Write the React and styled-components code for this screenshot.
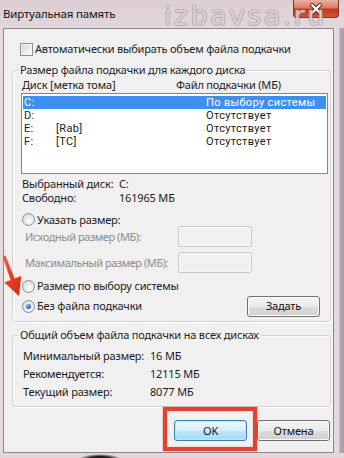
import React from 'react';
import styled, { createGlobalStyle } from 'styled-components';

const Global = createGlobalStyle`
  html, body { margin: 0; padding: 0; width: 344px; height: 458px; overflow: hidden; background: #b9a8b7; }
  #root { width: 344px; height: 458px; }
  * { box-sizing: border-box; }
`;

const Window = styled.div`
  position: relative;
  width: 344px;
  height: 458px;
  display: flex;
  flex-direction: column;
  font-family: "Noto Sans", "Open Sans", sans-serif;
  font-size: 11px;
  letter-spacing: -0.18px;
  white-space: nowrap;
  color: #1b1b1b;
  background: linear-gradient(180deg, #dccdd3 0, #e6dce0 40px, #e4d9de 100%);
  overflow: hidden;
`;

const TitleBar = styled.div`
  position: relative;
  height: 28px;
  display: flex;
  align-items: flex-start;
  flex-shrink: 0;
`;

const Title = styled.div`
  padding: 6px 0 0 3px;
  font-size: 11.5px;
  line-height: 16px;
  color: #111;
`;

const Watermark = styled.div`
  position: absolute;
  left: 164px;
  top: 0;
  font-family: "DejaVu Sans", Verdana, sans-serif;
  font-size: 27px;
  letter-spacing: 2.4px;
  line-height: normal;
  color: rgba(255, 255, 255, 0.62);
  text-shadow:
    1px 0 0 rgba(140, 128, 134, 0.45),
    -1px 0 0 rgba(140, 128, 134, 0.45),
    0 1px 0 rgba(140, 128, 134, 0.45),
    0 -1px 0 rgba(140, 128, 134, 0.35);
  pointer-events: none;
`;

const CloseButton = styled.div`
  margin-left: auto;
  margin-right: 5px;
  width: 46px;
  height: 18px;
  border: 1px solid #6f3a30;
  border-top: none;
  border-radius: 0 0 4px 4px;
  background: linear-gradient(180deg, #eab1a4 0%, #d97d66 45%, #c4391c 55%, #d4522f 100%);
  display: flex;
  align-items: center;
  justify-content: center;
`;

const Body = styled.div`
  flex: 1;
  display: flex;
`;

const SideFrame = styled.div`
  width: ${p => p.$w}px;
  flex-shrink: 0;
  background: ${p => p.$bg || 'transparent'};
`;

const Client = styled.div`
  width: 331px;
  flex-shrink: 0;
  border: 1px solid #8f868b;
  background: #f0f0f0;
  display: flex;
  flex-direction: column;
  padding: 12px 2px 0 8px;
`;

const BottomFrame = styled.div`
  height: 5px;
  flex-shrink: 0;
  background: radial-gradient(ellipse 22px 6px at 100px 7px, #111 0, #222 60%, rgba(0,0,0,0) 100%), #e2d7dc;
`;

const CheckRow = styled.label`
  display: flex;
  align-items: center;
  gap: 2px;
  height: 16px;
  padding-left: 8px;
  line-height: 16px;
`;

const CheckBox = styled.span`
  width: 13px;
  height: 13px;
  border: 1px solid #8e8f8f;
  background: linear-gradient(135deg, #d2d2d2 0%, #eeeeee 60%, #fbfbfb 100%);
  box-shadow: inset 0 0 0 1px #f4f4f4;
`;

const Group = styled.fieldset`
  margin: ${p => p.$mt}px 0 0 0;
  border: 1px solid #d2d2d2;
  border-radius: 3px;
  box-shadow: inset 1px 1px 0 #fff, 1px 1px 0 #fff;
  padding: ${p => p.$pt}px 2px ${p => p.$pb}px 8px;
  min-width: 0;
`;

const Legend = styled.legend`
  padding: 0 2px;
  margin-left: -3px;
  line-height: 16px;
  font-size: 11px;
`;

const HeaderRow = styled.div`
  display: grid;
  grid-template-columns: 154px 1fr;
  padding-left: 1px;
  height: 14px;
  line-height: 14px;
`;

const ListBox = styled.div`
  margin-top: 1px;
  width: 307px;
  height: 81px;
  border: 1px solid #828790;
  background: #fff;
  padding: 2px 1px;
  font-family: Roboto, "Noto Sans", sans-serif;
  font-size: 11px;
`;

const ListRow = styled.div`
  display: grid;
  grid-template-columns: 32px 150px 1fr;
  height: 13px;
  padding-left: 1px;
  background: ${p => (p.$selected ? '#3d8ff0' : 'transparent')};
  color: ${p => (p.$selected ? '#fff' : '#1b1b1b')};
`;

const Cell = styled.span`
  display: block;
  height: 13px;
  line-height: 13px;
  overflow: hidden;
  letter-spacing: 0.35px;
`;

const InfoGrid = styled.div`
  display: grid;
  grid-template-columns: ${p => p.$col}px 1fr;
  grid-auto-rows: ${p => p.$row}px;
  line-height: ${p => p.$row}px;
  margin-top: ${p => p.$mt}px;
  padding-left: ${p => p.$pl}px;
`;

const RadioRow = styled.div`
  display: flex;
  align-items: center;
  gap: 2px;
  height: ${p => p.$h || 14}px;
  margin-top: ${p => p.$mt || 0}px;
  padding-left: 1px;
  line-height: 14px;
`;

const Radio = styled.span`
  position: relative;
  width: 13px;
  height: 13px;
  border-radius: 50%;
  border: 1px solid #8e8f8f;
  background: radial-gradient(circle at 60% 65%, #fdfdfd 0%, #e6e6e6 55%, #cfcfcf 100%);
  flex-shrink: 0;
  &::after {
    content: '';
    display: ${p => (p.$checked ? 'block' : 'none')};
    position: absolute;
    left: 3px;
    top: 3px;
    width: 5px;
    height: 5px;
    border-radius: 50%;
    background: radial-gradient(circle at 40% 35%, #8fc2f4 0%, #2f6fc0 55%, #1b4b8e 100%);
  }
`;

const SizeRow = styled.div`
  display: flex;
  align-items: center;
  height: 21px;
  margin-top: ${p => p.$mt}px;
  padding-left: 4px;
  color: #8d8d8d;
`;

const SizeLabel = styled.span`
  width: 153px;
  flex-shrink: 0;
  letter-spacing: -0.45px;
`;

const SizeBox = styled.span`
  width: 74px;
  height: 21px;
  border: 1px solid #c8c8c8;
  border-radius: 2px;
  background: #f0f0f0;
  box-shadow: inset 0 0 0 1px #f6f6f6;
`;

const Button = styled.div`
  width: 73px;
  height: 21px;
  display: flex;
  align-items: center;
  justify-content: center;
  margin-left: ${p => p.$ml || 0};
  margin-right: ${p => p.$mr || 0}px;
  border: 1px solid ${p => (p.$default ? '#3c7fb1' : '#707070')};
  border-radius: 3px;
  background: ${p =>
    p.$default
      ? 'linear-gradient(180deg, #eaf6fd 0%, #d9f0fc 50%, #bee6fd 51%, #a7d9f5 100%)'
      : 'linear-gradient(180deg, #f2f2f2 0%, #ebebeb 50%, #dddddd 51%, #cfcfcf 100%)'};
  box-shadow: inset 0 0 0 1px ${p => (p.$default ? '#bfe6fb' : '#fcfcfc')};
  color: #111;
  line-height: 14px;
`;

const Footer = styled.div`
  position: relative;
  display: flex;
  justify-content: flex-end;
  gap: 10px;
  margin-top: 13px;
  padding-right: 1px;
`;

const Highlight = styled.div`
  position: absolute;
  left: 151px;
  top: -13px;
  width: 94px;
  height: 44px;
  border: 4px solid #e2432c;
  box-shadow: 0 0 1px #c0301c, inset 0 0 1px #c0301c;
  pointer-events: none;
`;

const Arrow = styled.svg`
  position: absolute;
  left: 0;
  top: 250px;
  width: 24px;
  height: 50px;
  pointer-events: none;
`;

const rows = [
  { d: 'C:', l: '', s: 'По выбору системы', sel: true },
  { d: 'D:', l: '', s: 'Отсутствует' },
  { d: 'E:', l: '[Rab]', s: 'Отсутствует' },
  { d: 'F:', l: '[TC]', s: 'Отсутствует' },
];

export default function App() {
  return (
    <Window>
      <Global />
      <TitleBar>
        <Title>Виртуальная память</Title>
        <CloseButton>
          <svg width="14" height="12" viewBox="0 0 14 12">
            <path d="M3 2 L11 10 M11 2 L3 10" stroke="#5a2a22" strokeWidth="4" strokeLinecap="round" />
            <path d="M3 2 L11 10 M11 2 L3 10" stroke="#fff" strokeWidth="2.2" strokeLinecap="round" />
          </svg>
        </CloseButton>
        <Watermark>izbavsa.ru</Watermark>
      </TitleBar>
      <Body>
        <SideFrame $w={3} />
        <Client>
          <CheckRow>
            <CheckBox />
            Автоматически выбирать объем файла подкачки
          </CheckRow>
          <Group $mt={5} $pt={0} $pb={5}>
            <Legend>Размер файла подкачки для каждого диска</Legend>
            <HeaderRow>
              <span>Диск [метка тома]</span>
              <span>Файл подкачки (МБ)</span>
            </HeaderRow>
            <ListBox>
              {rows.map(r => (
                <ListRow key={r.d} $selected={r.sel}>
                  <Cell>{r.d}</Cell>
                  <Cell>{r.l}</Cell>
                  <Cell>{r.s}</Cell>
                </ListRow>
              ))}
            </ListBox>
            <InfoGrid $col={97} $row={14} $mt={3} $pl={1}>
              <span>Выбранный диск:</span>
              <span>C:</span>
              <span>Свободно:</span>
              <span>161965 МБ</span>
            </InfoGrid>
            <RadioRow $mt={8} $h={13}>
              <Radio />
              Указать размер:
            </RadioRow>
            <SizeRow $mt={0}>
              <SizeLabel>Исходный размер (МБ):</SizeLabel>
              <SizeBox />
            </SizeRow>
            <SizeRow $mt={5}>
              <SizeLabel>Максимальный размер (МБ):</SizeLabel>
              <SizeBox />
            </SizeRow>
            <RadioRow $mt={6}>
              <Radio />
              Размер по выбору системы
            </RadioRow>
            <RadioRow $mt={3} $h={20}>
              <Radio $checked />
              Без файла подкачки
              <Button $ml="auto" $mr={8}>Задать</Button>
            </RadioRow>
          </Group>
          <Group $mt={5} $pt={4} $pb={5}>
            <Legend>Общий объем файла подкачки на всех дисках</Legend>
            <InfoGrid $col={127} $row={18} $mt={0} $pl={2}>
              <span>Минимальный размер:</span>
              <span>16 МБ</span>
              <span>Рекомендуется:</span>
              <span>12115 МБ</span>
              <span>Текущий размер:</span>
              <span>8077 МБ</span>
            </InfoGrid>
          </Group>
          <Footer>
            <Button $default>OK</Button>
            <Button>Отмена</Button>
            <Highlight />
          </Footer>
        </Client>
        <SideFrame $w={10} $bg="linear-gradient(90deg, #e4d9de 0, #e4d9de 45%, #b7a4b5 60%, #ad9bac 100%)" />
      </Body>
      <BottomFrame />
      <Arrow viewBox="0 0 24 50">
        <defs>
          <linearGradient id="ag" x1="0" y1="0" x2="1" y2="1">
            <stop offset="0" stopColor="#f25a36" />
            <stop offset="1" stopColor="#d8260f" />
          </linearGradient>
        </defs>
        <polygon
          points="5.4,5.5 14.6,28.5 21.2,26 19,46 4.2,32.5 10.6,30 2.6,6.5"
          fill="url(#ag)"
        />
      </Arrow>
    </Window>
  );
}
